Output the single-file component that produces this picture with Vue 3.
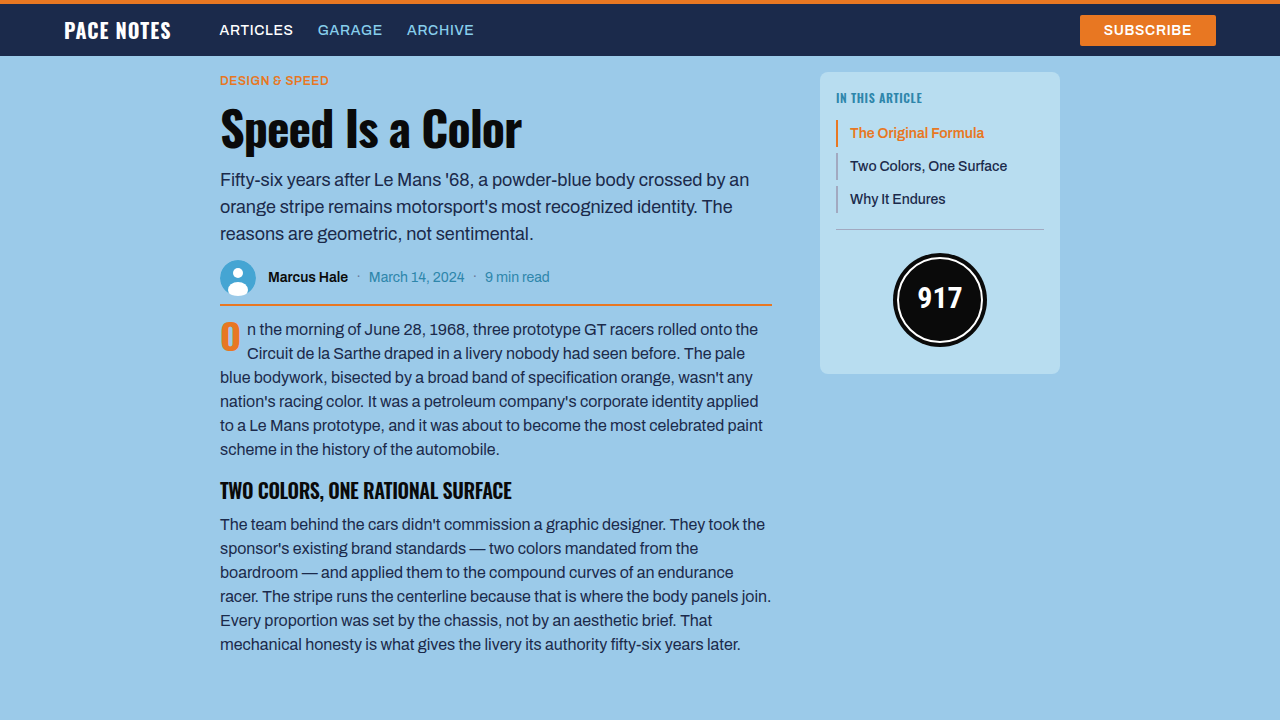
<script setup>
const navLinks = [
  { label: 'Articles', active: true },
  { label: 'Garage', active: false },
  { label: 'Archive', active: false },
]
const sections = [
  { label: 'The Original Formula', active: true },
  { label: 'Two Colors, One Surface', active: false },
  { label: 'Why It Endures', active: false },
]
</script>

<template>
  <div class="page">
    <header class="bar">
      <a class="brand" href="#">PACE NOTES</a>
      <nav class="nav" aria-label="Main">
        <a v-for="link in navLinks" :key="link.label" href="#" :class="{ active: link.active }">{{ link.label }}</a>
      </nav>
      <button class="subscribe" type="button">Subscribe</button>
    </header>

    <main class="layout">
      <article class="article">
        <p class="kicker">Design &amp; Speed</p>
        <h1>Speed Is a Color</h1>
        <p class="deck">
          Fifty-six years after Le Mans '68, a powder-blue body crossed by an orange stripe remains motorsport's most recognized identity. The reasons are geometric, not sentimental.
        </p>
        <div class="byline">
          <svg class="avatar" viewBox="0 0 36 36" aria-hidden="true">
            <circle cx="18" cy="18" r="18" fill="#45a5d3" />
            <circle cx="18" cy="13" r="5" fill="#fff" />
            <ellipse cx="18" cy="30" rx="10" ry="8" fill="#fff" />
          </svg>
          <span class="author">Marcus Hale</span>
          <span class="dot">·</span>
          <time datetime="2024-03-14">March 14, 2024</time>
          <span class="dot">·</span>
          <span>9 min read</span>
        </div>
        <p class="body lead">
          On the morning of June 28, 1968, three prototype GT racers rolled onto the Circuit de la Sarthe draped in a livery nobody had seen before. The pale blue bodywork, bisected by a broad band of specification orange, wasn't any nation's racing color. It was a petroleum company's corporate identity applied to a Le Mans prototype, and it was about to become the most celebrated paint scheme in the history of the automobile.
        </p>
        <h2>Two Colors, One Rational Surface</h2>
        <p class="body">
          The team behind the cars didn't commission a graphic designer. They took the sponsor's existing brand standards — two colors mandated from the boardroom — and applied them to the compound curves of an endurance racer. The stripe runs the centerline because that is where the body panels join. Every proportion was set by the chassis, not by an aesthetic brief. That mechanical honesty is what gives the livery its authority fifty-six years later.
        </p>
      </article>

      <aside class="card">
        <h3>In This Article</h3>
        <nav class="toc" aria-label="In this article">
          <a v-for="item in sections" :key="item.label" href="#" :class="{ active: item.active }">{{ item.label }}</a>
        </nav>
        <div class="badge-wrap">
          <div class="badge">917</div>
        </div>
      </aside>
    </main>
  </div>
</template>

<style>
body {
  margin: 0;
  background: #9bcae9;
}
</style>

<style scoped>
.page {
  --display: Oswald, "Roboto Condensed", "Liberation Sans Narrow", sans-serif;
  --text: Archivo, "Liberation Sans", Arial, sans-serif;
  min-height: 100vh;
  background: #9bcae9;
  color: #1b2a4b;
  font-family: var(--text);
}
a {
  text-decoration: none;
}
.bar {
  display: flex;
  align-items: center;
  height: 52px;
  padding: 0 64px;
  border-top: 4px solid #e87722;
  background: #1b2a4b;
}
.brand {
  font: 700 20px/30px var(--display);
  letter-spacing: 0.05em;
  color: #fff;
}
.nav {
  display: flex;
  gap: 24px;
  margin-left: 48px;
  font-size: 14px;
  line-height: 21px;
  font-weight: 500;
  letter-spacing: 0.05em;
  text-transform: uppercase;
}
.nav a {
  color: #87ceeb;
}
.nav a.active {
  color: #fff;
}
.subscribe {
  margin-left: auto;
  padding: 8px 24px;
  border: 0;
  border-radius: 2px;
  background: #e87722;
  color: #fff;
  font: 600 14px/15px var(--text);
  letter-spacing: 0.05em;
  text-transform: uppercase;
}
.layout {
  display: grid;
  grid-template-columns: minmax(0, 1fr) 240px;
  gap: 48px;
  align-items: start;
  max-width: 840px;
  margin: 0 auto;
  padding: 16px 0;
}
.kicker {
  margin: 0;
  font-size: 12px;
  line-height: 18px;
  font-weight: 600;
  letter-spacing: 0.05em;
  text-transform: uppercase;
  color: #e87722;
}
h1 {
  margin: 10px 0 14px;
  font: 700 48px/53px var(--display);
  letter-spacing: -0.02em;
  color: #0a0a0a;
}
.deck {
  margin: 0;
  font-size: 18px;
  line-height: 27px;
}
.byline {
  display: flex;
  align-items: center;
  margin-top: 12px;
  padding-bottom: 8px;
  border-bottom: 2px solid #e87722;
  font-size: 14px;
  line-height: 20px;
  color: #2e86ab;
}
.avatar {
  width: 36px;
  height: 36px;
  margin-right: 12px;
  border-radius: 50%;
}
.author {
  font-weight: 600;
  color: #0a0a0a;
}
.dot {
  margin: 0 8px;
  color: #6b7a99;
}
.body {
  margin: 0;
  font-size: 16px;
  line-height: 24px;
}
.lead {
  margin-top: 12px;
}
.lead::first-letter {
  float: left;
  margin-right: 6px;
  font: 700 36px/34px var(--display);
  color: #e87722;
}
h2 {
  margin: 16px 0 10px;
  font: 600 20px/25px var(--display);
  letter-spacing: -0.02em;
  text-transform: uppercase;
  color: #0a0a0a;
}
.card {
  padding: 16px;
  border-radius: 8px;
  background: #b8ddf0;
}
h3 {
  margin: 0 0 12px;
  font: 600 12px/20px var(--display);
  letter-spacing: 0.05em;
  text-transform: uppercase;
  color: #2e86ab;
}
.toc {
  display: flex;
  flex-direction: column;
  gap: 6px;
}
.toc a {
  padding: 3px 0 3px 12px;
  border-left: 2px solid #a2a9c0;
  font-size: 14px;
  line-height: 21px;
  font-weight: 500;
  color: #1b2a4b;
}
.toc a.active {
  border-color: #e87722;
  font-weight: 600;
  color: #e87722;
}
.badge-wrap {
  display: flex;
  justify-content: center;
  margin-top: 16px;
  padding: 23px 0 11px;
  border-top: 1px solid #a2a9c0;
}
.badge {
  display: flex;
  align-items: center;
  justify-content: center;
  box-sizing: border-box;
  width: 86px;
  height: 86px;
  margin: 4px;
  padding-bottom: 4px;
  border: 2px solid #fff;
  border-radius: 50%;
  background: #0a0a0a;
  box-shadow: 0 0 0 4px #0a0a0a;
  font: 700 30px/36px "Roboto Condensed", var(--display);
  color: #fff;
}
</style>
